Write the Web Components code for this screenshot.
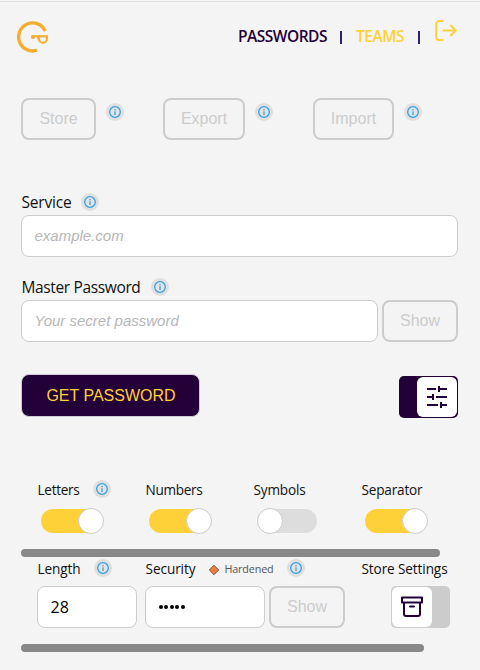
<!DOCTYPE html>
<html lang="en">
<head>
<meta charset="utf-8">
<title>Passwords</title>
<style>
html,body{margin:0;background:#f4f4f4}
body{width:480px;height:670px;overflow:hidden;font-family:"Open Sans","Noto Sans",sans-serif;color:#111}
</style>
</head>
<body>
<password-page></password-page>
<script>
const define = (name, html, setup) => customElements.define(name, class extends HTMLElement {
  connectedCallback() {
    if (this.shadowRoot) return;
    this.attachShadow({mode: 'open'}).innerHTML = html;
    if (setup) setup(this, this.shadowRoot);
  }
});

// Text label whose tracking is adjusted to fill its "w" width.
define('fit-text', `<style>:host{display:block;white-space:nowrap;flex:none}span{display:inline-block}</style><span><slot></slot></span>`, (el, root) => {
  const span = root.querySelector('span');
  const w = parseFloat(el.getAttribute('w'));
  const n = el.textContent.length;
  span.style.letterSpacing = ((w - span.getBoundingClientRect().width) / n) + 'px';
  el.style.width = w + 'px';
});

define('info-dot', `<style>:host{display:block;flex:none;width:18px;height:18px}svg{display:block}</style>
<svg width="18" height="18" viewBox="0 0 18 18"><circle cx="9" cy="9" r="9" fill="#dfdfdf"/><circle cx="9" cy="9" r="5.3" fill="#e2e3e4" stroke="#38a1e0" stroke-width="1.3"/><path d="M9 8.2v3.7M9 6.1v1.2" stroke="#38a1e0" stroke-width="1.3"/></svg>`);

define('ghost-button', `<style>:host{display:block;flex:none;height:42px}
button{box-sizing:border-box;display:block;width:100%;height:42px;margin:0;padding:0 0 1px;border:2px solid #ccc;border-radius:8px;background:transparent;color:#ccc;font:16px/20px "Liberation Sans",Arial,sans-serif}</style><button><slot></slot></button>`,
  el => { el.style.width = el.getAttribute('w') + 'px'; });

define('text-field', `<style>:host{box-sizing:border-box;display:flex;align-items:center;flex:none;height:42px;padding:0 12px 1px 12.5px;border:1px solid #ccc;border-radius:8px;background:#fff;font:16px "Open Sans",sans-serif;color:#000}
:host([hint]){font:italic 15px "Liberation Sans",Arial,sans-serif;color:#b6b6b6}</style><slot></slot>`,
  el => { el.style.width = el.getAttribute('w') + 'px'; });

define('pill-switch', `<style>:host{display:flex;align-items:center;width:60px;height:24px;border-radius:12px;background:#ddd}
:host([on]){background:#ffd139}
i{box-sizing:border-box;flex:none;width:26px;height:26px;border:1px solid #ccc;border-radius:50%;background:#fff}
:host([on]) i{margin-left:37px}</style><i></i>`);

define('box-toggle', `<style>:host{box-sizing:border-box;display:flex;flex:none;width:59px;height:42px;padding:1px;border-radius:5px;background:#ccc}
:host([on]){background:#230037;justify-content:flex-end}
div{width:40px;height:40px;border-radius:6px;background:#fff;display:flex;align-items:center;justify-content:center}</style><div><slot></slot></div>`);

define('scroll-rule', `<style>:host{display:block;height:8px;margin-left:21px;border-radius:4px;background:#888}</style>`,
  el => { el.style.width = el.getAttribute('w') + 'px'; });

define('app-header', `<style>
:host{box-sizing:border-box;display:flex;height:70px;border-top:1px solid #dfe2e2;padding:19px 22px 0 16px}
svg{display:block;flex:none}
nav{display:flex;margin-left:auto;font-size:15.5px;line-height:22px;font-weight:600;color:#230037}
nav>*{margin-top:4px}
.y{color:#ffd139}.bar{box-sizing:border-box;width:2px;height:13px;background:#33206b;margin-top:10px}
nav svg{margin:-2px 0 0 14px}
</style>
<svg width="34" height="34" viewBox="0 0 34 34" fill="none" stroke="#f6ad2f"><path d="M29.3 9.9A14 14 0 1 0 21 29.2" stroke-width="3.4"/><path d="M16 15.3h16" stroke-width="2.2"/><circle cx="17" cy="16" r="2.1" fill="#f6ad2f" stroke="none"/><path d="M21 17.2h3M23 16.4v1.4a3.8 4 0 0 0 3.8 4h.2a3.9 4 0 0 0 3.9-4v-2" stroke-width="2.1"/></svg>
<nav><fit-text w="89">PASSWORDS</fit-text><span class="bar" style="margin-left:13px"></span><fit-text class="y" w="48" style="margin-left:14px">TEAMS</fit-text><span class="bar" style="margin-left:14px"></span>
<svg width="24" height="24" viewBox="0 0 24 24" fill="none" stroke="#ffd139" stroke-width="2"><path d="M9.5 2H5.2A3 3 0 0 0 2.2 5v13a3 3 0 0 0 3 3H9.5" /><path d="M8.5 11.5h13M16.3 6l5.4 5.5L16.3 17"/></svg></nav>`);

define('password-page', `<style>
:host{display:block;width:480px;height:670px;margin-top:1px}
.row{display:flex}
.body{padding:0 22px 0 21px}
.label{display:flex;height:22px;font-size:15.5px;line-height:22px}
.label fit-text{padding-left:.5px;margin-right:-.5px}
.opts{display:grid;grid-template-columns:108px 108px 108px 97px;padding:0 21px 0 37px}
.opt{display:flex;font-size:13.6px;line-height:20px;height:28px}
.opt fit-text{padding-left:.5px;margin-right:-.5px}
.get{box-sizing:border-box;width:179px;height:43px;border:1px solid #d0ccd4;border-radius:8px;background:#230037;color:#ffd139;font:16px "Liberation Sans",Arial,sans-serif;padding:1px 0 0 1px;display:block}
svg{display:block}
.dots{display:flex;gap:1.6px;font:0/0 sans-serif}.dots b{width:4px;height:4px;border-radius:50%;background:#000}
</style>
<app-header></app-header>
<div class="body">
 <div class="row" style="padding-top:27px">
  <ghost-button w="75">Store</ghost-button><info-dot style="margin:5px 39px 0 10px"></info-dot>
  <ghost-button w="82">Export</ghost-button><info-dot style="margin:5px 40px 0 10px"></info-dot>
  <ghost-button w="81">Import</ghost-button><info-dot style="margin:5px 0 0 10px"></info-dot>
 </div>
 <div class="label" style="margin-top:53px"><fit-text w="50" style="margin-top:-2px">Service</fit-text><info-dot style="margin-left:10px"></info-dot></div>
 <text-field w="437" hint>example.com</text-field>
 <div class="label" style="margin-top:21px"><fit-text w="119" style="margin-top:-2px">Master Password</fit-text><info-dot style="margin-left:11px"></info-dot></div>
 <div class="row" style="gap:4px"><text-field w="357" hint>Your secret password</text-field><ghost-button w="76">Show</ghost-button></div>
 <div class="row" style="justify-content:space-between;margin-top:32px;align-items:flex-start"><button class="get">GET PASSWORD</button>
  <box-toggle on style="margin-top:2px"><svg width="24" height="24" viewBox="0 0 24 24" fill="none" stroke="#230037" stroke-width="2"><path d="M2 4h9M14 4h8M14 1v6M2 12h6M8 9v6M11 12h11M2 20h11M16 20h6M16 17v6"/></svg></box-toggle></div>
</div>
<div class="opts" style="margin-top:62px">
 <div><div class="opt"><fit-text w="42">Letters</fit-text><info-dot style="margin-left:14px"></info-dot></div><pill-switch on style="margin:1px 0 0 4px"></pill-switch></div>
 <div><div class="opt"><fit-text w="57">Numbers</fit-text></div><pill-switch on style="margin:1px 0 0 4px"></pill-switch></div>
 <div><div class="opt"><fit-text w="52">Symbols</fit-text></div><pill-switch style="margin:1px 0 0 4px"></pill-switch></div>
 <div><div class="opt"><fit-text w="61">Separator</fit-text></div><pill-switch on style="margin:1px 0 0 4px"></pill-switch></div>
</div>
<scroll-rule w="419" style="margin-top:16px"></scroll-rule>
<div class="opts" style="margin-top:2px;grid-template-columns:108px 216px 97px">
 <div><div class="opt" style="height:27px"><fit-text w="43">Length</fit-text><info-dot style="margin-left:14px"></info-dot></div><text-field w="100">28</text-field></div>
 <div><div class="opt" style="height:27px"><fit-text w="50">Security</fit-text>
   <svg width="12" height="12" viewBox="0 0 12 12" style="margin:5px 4px 0 13px"><path d="M6 1.3L10.7 6L6 10.7L1.3 6z" fill="#f47b3e" stroke="#705850"/></svg>
   <fit-text w="49" style="font-size:10.8px;color:#555">Hardened</fit-text><info-dot style="margin-left:14px"></info-dot></div>
  <div class="row" style="gap:4px"><text-field w="120"><span class="dots"><b></b><b></b><b></b><b></b><b></b></span></text-field><ghost-button w="76">Show</ghost-button></div></div>
 <div><div class="opt" style="height:27px"><fit-text w="86">Store Settings</fit-text></div><box-toggle style="margin-left:30px"><svg width="24" height="24" viewBox="0 0 24 24" fill="none" stroke="#230037" stroke-width="2" stroke-linejoin="round" stroke-linecap="round"><path d="M2 2.5h20v5H2zM4 8v11q0 2 2 2h12q2 0 2-2V8M10 11.5h4"/></svg></box-toggle></div>
</div>
<scroll-rule w="403" style="margin-top:16px"></scroll-rule>`);
</script>
</body>
</html>
